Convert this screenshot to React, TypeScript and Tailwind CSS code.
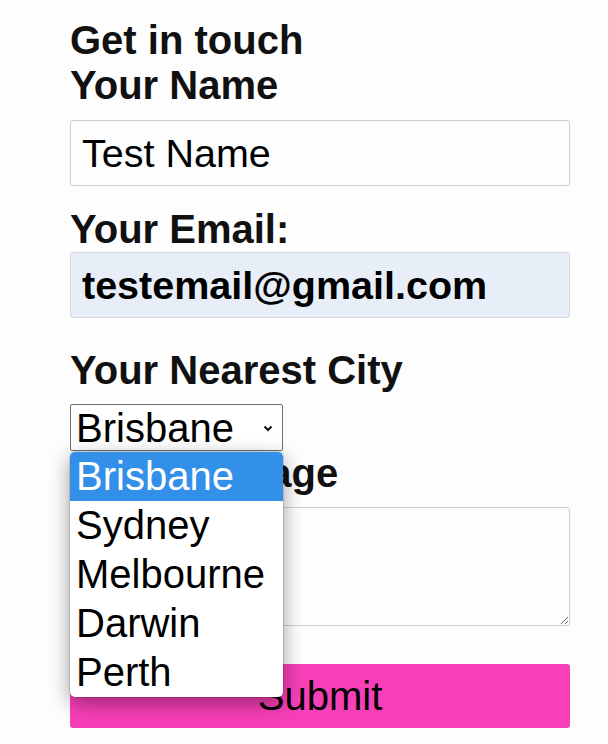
import React from 'react';

const cities = ['Brisbane', 'Sydney', 'Melbourne', 'Darwin', 'Perth'];

export default function App() {
  return (
    <div className="min-h-[744px] w-[608px] bg-[#fdfdfe] font-['Liberation_Sans',Arial,sans-serif] text-black">
      <form className="ml-[70px] w-[500px] pt-[18px]" onSubmit={(e) => e.preventDefault()}>
        <h2 className="text-[40px] font-bold leading-[45px] text-[#111]">Get in touch</h2>
        <label className="block text-[40px] font-bold leading-[45px] text-[#111]">Your Name</label>
        <input
          defaultValue="Test Name"
          className="mt-[12px] block h-[66px] w-full rounded-[3px] border border-[#cfcfcf] bg-transparent px-[11px] text-[39.5px] outline-none"
        />

        <label className="mt-[21px] block text-[40px] font-bold leading-[45px] text-[#111]">Your Email:</label>
        <input
          defaultValue="testemail@gmail.com"
          className="block h-[66px] w-full rounded-[3px] border border-[#d4d8de] bg-[#e8eef8] px-[11px] text-[39.5px] font-bold outline-none"
        />

        <label className="mt-[30px] block text-[40px] font-bold leading-[45px] text-[#111]">Your Nearest City</label>
        <div className="relative mt-[11px] w-[213px]">
          <div className="flex h-[47px] w-full items-center justify-between rounded-[2px] border border-[#6f6f6f] bg-white pl-[5px] pr-[9px]">
            <span className="text-[40px] leading-none">Brisbane</span>
            <svg width="10" height="7" viewBox="0 0 10 7" className="mt-[2px]">
              <path d="M1.5 1.5 L5 5 L8.5 1.5" fill="none" stroke="#111" strokeWidth="2" />
            </svg>
          </div>
          <ul className="absolute left-0 top-[48px] z-10 w-[213px] overflow-hidden rounded-[5px] bg-white shadow-[0_6px_20px_rgba(0,0,0,0.4),0_0_0_1px_rgba(0,0,0,0.12)]">
            {cities.map((c, i) => (
              <li
                key={c}
                className={
                  i === 0
                    ? 'h-[49px] bg-[#3290e9] pl-[6px] text-[40px] leading-[49px] text-white'
                    : 'h-[49px] pl-[6px] text-[40px] leading-[49px] text-black'
                }
              >
                {c}
              </li>
            ))}
          </ul>
        </div>

        <label className="block text-[40px] font-bold leading-[45px] text-[#111]">Your Message</label>
        <textarea className="mt-[11px] block h-[119px] w-full rounded-[3px] border border-[#cfcfcf] bg-transparent px-[11px] text-[39.5px] outline-none" />

        <button
          type="submit"
          className="mt-[38px] block h-[64px] w-full rounded-[3px] bg-[#f73fb8] text-[40px] text-black"
        >
          Submit
        </button>
      </form>
    </div>
  );
}
